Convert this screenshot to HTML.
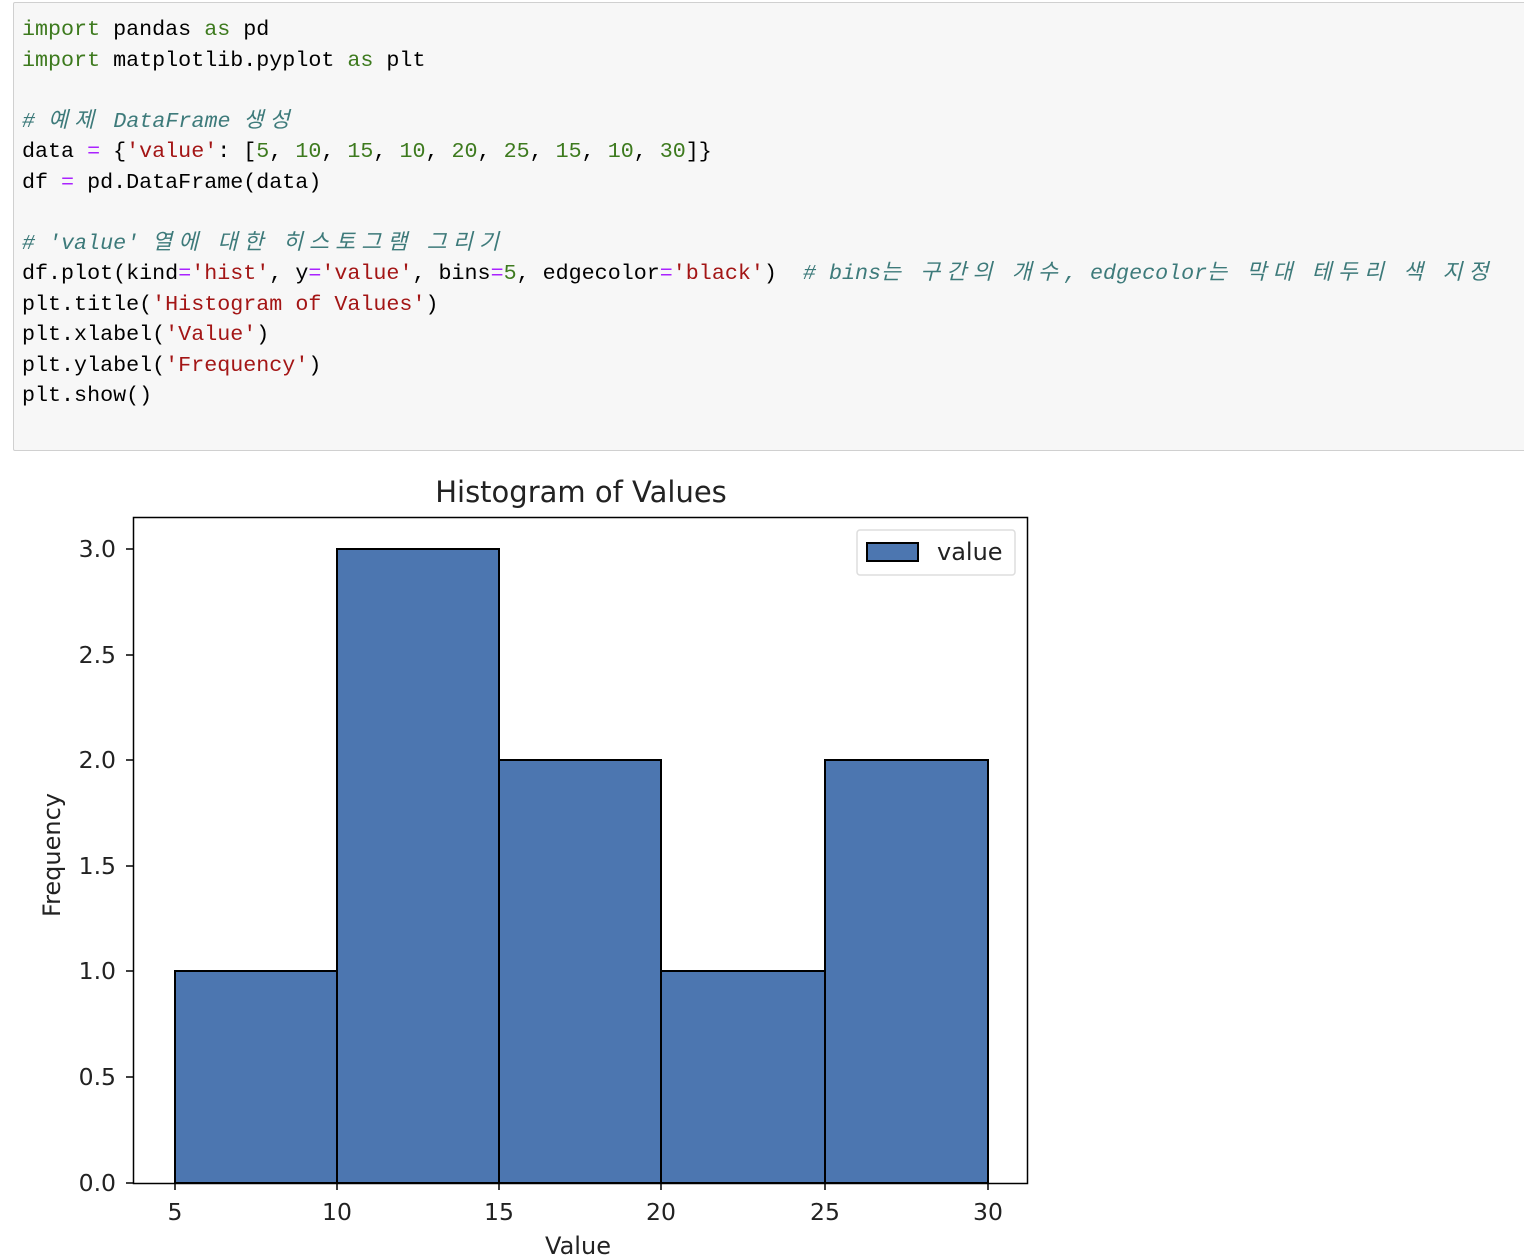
<!DOCTYPE html>
<html><head><meta charset="utf-8"><style>
body{margin:0;background:#fff;width:1524px;height:1258px;overflow:hidden;position:relative}
.code{position:absolute;left:13px;top:2px;width:1520px;height:449px;background:#f7f7f7;border:1px solid #d0d0d0;border-radius:2px;box-sizing:border-box}
pre{margin:0;position:absolute;left:8px;top:12px;font-family:"Liberation Mono","Noto Sans CJK KR",monospace;font-size:21.7px;line-height:30.5px;color:#000}
.k{color:#3d7a1e}.s{color:#a31515}.n{color:#3d7a1e}.o{color:#aa22ff}.c{color:#3d7a7a;font-style:italic}
.h{letter-spacing:6.2px}
svg{position:absolute;left:0;top:0}
svg text{font-family:"DejaVu Sans",sans-serif;fill:#222}
</style></head><body>
<div class="code"><pre><span class="k">import</span> pandas <span class="k">as</span> pd
<span class="k">import</span> matplotlib.pyplot <span class="k">as</span> plt

<span class="c"># <span class="h">예제</span> DataFrame <span class="h">생성</span></span>
data <span class="o">=</span> {<span class="s">'value'</span>: [<span class="n">5</span>, <span class="n">10</span>, <span class="n">15</span>, <span class="n">10</span>, <span class="n">20</span>, <span class="n">25</span>, <span class="n">15</span>, <span class="n">10</span>, <span class="n">30</span>]}
df <span class="o">=</span> pd.DataFrame(data)

<span class="c"># 'value' <span class="h">열에</span> <span class="h">대한</span> <span class="h">히스토그램</span> <span class="h">그리기</span></span>
df.plot(kind<span class="o">=</span><span class="s">'hist'</span>, y<span class="o">=</span><span class="s">'value'</span>, bins<span class="o">=</span><span class="n">5</span>, edgecolor<span class="o">=</span><span class="s">'black'</span>)  <span class="c"># bins<span class="h">는</span> <span class="h">구간의</span> <span class="h">개수</span>, edgecolor<span class="h">는</span> <span class="h">막대</span> <span class="h">테두리</span> <span class="h">색</span> <span class="h">지정</span></span>
plt.title(<span class="s">'Histogram of Values'</span>)
plt.xlabel(<span class="s">'Value'</span>)
plt.ylabel(<span class="s">'Frequency'</span>)
plt.show()</pre></div>
<svg width="1524" height="1258" xmlns="http://www.w3.org/2000/svg">
<g fill="#4c76b0" stroke="#000" stroke-width="2">
<rect x="175" y="971" width="162" height="212"/>
<rect x="337" y="549" width="162" height="634"/>
<rect x="499" y="760" width="162" height="423"/>
<rect x="661" y="971" width="164" height="212"/>
<rect x="825" y="760" width="163" height="423"/>
</g>
<rect x="133.5" y="517.5" width="894" height="666" fill="none" stroke="#000" stroke-width="1.5"/>
<g stroke="#000" stroke-width="1.5">
<line x1="175" y1="1183" x2="175" y2="1190"/><line x1="337" y1="1183" x2="337" y2="1190"/><line x1="499" y1="1183" x2="499" y2="1190"/><line x1="661" y1="1183" x2="661" y2="1190"/><line x1="825" y1="1183" x2="825" y2="1190"/><line x1="988" y1="1183" x2="988" y2="1190"/>
<line x1="126" y1="1183" x2="133" y2="1183"/><line x1="126" y1="1077" x2="133" y2="1077"/><line x1="126" y1="971" x2="133" y2="971"/><line x1="126" y1="866" x2="133" y2="866"/><line x1="126" y1="760" x2="133" y2="760"/><line x1="126" y1="655" x2="133" y2="655"/><line x1="126" y1="549" x2="133" y2="549"/>
</g>
<g font-size="23.5" text-anchor="middle">
<text x="175" y="1220">5</text><text x="337" y="1220">10</text><text x="499" y="1220">15</text><text x="661" y="1220">20</text><text x="825" y="1220">25</text><text x="988" y="1220">30</text>
</g>
<g font-size="23.5" text-anchor="end">
<text x="116" y="1191">0.0</text><text x="116" y="1085">0.5</text><text x="116" y="979">1.0</text><text x="116" y="874">1.5</text><text x="116" y="768">2.0</text><text x="116" y="663">2.5</text><text x="116" y="557">3.0</text>
</g>
<text x="578" y="1254" font-size="24" text-anchor="middle">Value</text>
<text transform="translate(60,855) rotate(-90)" font-size="24" text-anchor="middle">Frequency</text>
<text x="581" y="502" font-size="29" text-anchor="middle">Histogram of Values</text>
<rect x="857" y="530" width="158" height="45" rx="3" fill="#fff" stroke="#ddd" stroke-width="1.5"/>
<rect x="867" y="543" width="51" height="18" fill="#4c76b0" stroke="#000" stroke-width="2"/>
<text x="937" y="560" font-size="24">value</text>
</svg>
</body></html>
